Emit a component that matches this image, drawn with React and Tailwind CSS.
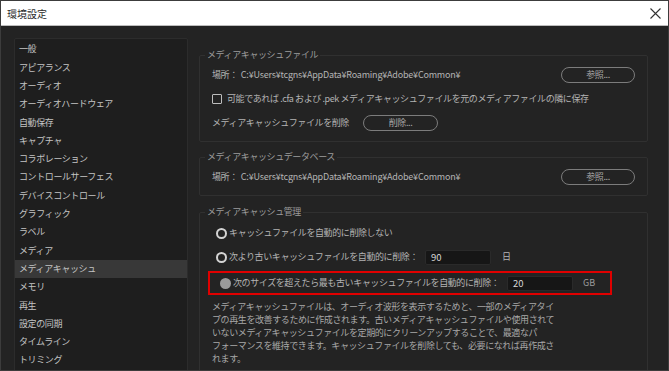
import React from "react";

const font = "[font-family:'Noto_Sans_CJK_JP','Noto_Sans',sans-serif]";

const menu = [
  "一般", "アピアランス", "オーディオ", "オーディオハードウェア", "自動保存", "キャプチャ",
  "コラボレーション", "コントロールサーフェス", "デバイスコントロール", "グラフィック", "ラベル",
  "メディア", "メディアキャッシュ", "メモリ", "再生", "設定の同期", "タイムライン", "トリミング",
];

function PillButton({ children, className = "" }) {
  return (
    <div className={`flex h-[16px] w-[74px] items-center justify-center rounded-full border-[1.5px] border-[#7c7c7c] text-[9px] text-[#a8a8a8] ${className}`}>
      {children}
    </div>
  );
}

function Group({ title, children, className = "" }) {
  return (
    <fieldset className={`rounded-[2px] border border-[#303030] px-[12px] ${className}`}>
      <legend className="ml-[-7px] px-[2px] text-[9px] leading-[14px] text-[#9c9c9c]">{title}</legend>
      {children}
    </fieldset>
  );
}

function Radio({ filled }) {
  return filled ? (
    <span className="ml-[4px] h-[11px] w-[11px] shrink-0 rounded-full bg-[#9a9a9a]" />
  ) : (
    <span className="ml-[4px] h-[11px] w-[11px] shrink-0 rounded-full border-2 border-[#d4d4d4]" />
  );
}

function NumInput({ value }) {
  return (
    <div className="flex h-[15px] w-[66px] shrink-0 items-center rounded-[2px] border border-[#2a2a2a] bg-[#161616] pl-[5px] text-[9.5px] tracking-normal text-[#d8d8d8]">
      {value}
    </div>
  );
}

function PathText() {
  return (
    <span className="flex items-center whitespace-nowrap">
      <span>場所：</span>
      <span className="ml-[3px] text-[9px] tracking-[-0.2px]">C:¥Users¥tcgns¥AppData¥Roaming¥Adobe¥Common¥</span>
    </span>
  );
}

export default function App() {
  return (
    <div className={`h-[371px] w-[669px] overflow-hidden border border-[#3c3c3c] bg-[#232323] ${font}`}>
      <div className="flex h-[25px] items-center justify-between border-b border-[#bdbdbd] bg-white pl-[6px] pr-[7px]">
        <span className="text-[10px] text-[#2a2a2a]">環境設定</span>
        <svg width="11" height="11" viewBox="0 0 11 11" className="mt-[1px]">
          <path d="M0.5 0.5 L10.5 10.5 M10.5 0.5 L0.5 10.5" stroke="#333" strokeWidth="1.1" fill="none" />
        </svg>
      </div>

      <div className="flex pl-[13px] pt-[12px] tracking-[-0.4px]">
        <div className="h-[340px] w-[174px] shrink-0 rounded-[2px] border border-[#2c2c2c] bg-[#1e1e1e] pt-[1px]">
          {menu.map((m) => (
            <div
              key={m}
              className={`flex h-[18.3px] items-center px-[4px] text-[9px] text-[#c4c4c4] ${m === "メディアキャッシュ" ? "bg-[#383838]" : ""}`}
            >
              {m}
            </div>
          ))}
        </div>

        <div className="ml-[11px] mt-[10px] w-[449px] text-[9px] text-[#b4b4b4]">
          <Group title="メディアキャッシュファイル" className="pb-[6px]">
            <div className="pt-[1px]">
              <div className="flex h-[24px] items-center justify-between">
                <PathText />
                <PillButton>参照...</PillButton>
              </div>
              <div className="flex h-[24px] items-center">
                <span className="h-[10px] w-[10px] shrink-0 rounded-[1px] border-[1.5px] border-[#bdbdbd]" />
                <span className="ml-[5px] whitespace-nowrap">可能であれば .cfa および .pek メディアキャッシュファイルを元のメディアファイルの隣に保存</span>
              </div>
              <div className="flex h-[24px] items-center">
                <span className="w-[151px] whitespace-nowrap">メディアキャッシュファイルを削除</span>
                <PillButton className="w-[75px]">削除...</PillButton>
              </div>
            </div>
          </Group>

          <Group title="メディアキャッシュデータベース" className="mt-[8px] pb-[7px]">
            <div className="flex h-[24px] items-center justify-between pt-[1px]">
              <PathText />
              <PillButton>参照...</PillButton>
            </div>
          </Group>

          <Group title="メディアキャッシュ管理" className="mt-[9px] pb-[10px]">
            <div className="pt-[2px]">
              <div className="flex h-[24px] items-center">
                <Radio />
                <span className="ml-[2px] whitespace-nowrap">キャッシュファイルを自動的に削除しない</span>
              </div>
              <div className="flex h-[24px] items-center">
                <Radio />
                <span className="ml-[2px] w-[196px] whitespace-nowrap">次より古いキャッシュファイルを自動的に削除：</span>
                <NumInput value="90" />
                <span className="ml-[11px]">日</span>
              </div>
              <div className="-ml-[4px] mt-[2px] flex h-[24px] w-[404px] items-center border-2 border-[#e00000] pl-[6px]">
                <Radio filled />
                <span className="ml-[2px] w-[274px] whitespace-nowrap">次のサイズを超えたら最も古いキャッシュファイルを自動的に削除：</span>
                <NumInput value="20" />
                <span className="ml-[10px] text-[9px] tracking-normal text-[#9c9c9c]">GB</span>
              </div>
              <div className="mt-[5px] leading-[13px] text-[#a8a8a8]">
                <div className="whitespace-nowrap">メディアキャッシュファイルは、オーディオ波形を表示するためと、一部のメディアタイ</div>
                <div className="whitespace-nowrap">プの再生を改善するために作成されます。古いメディアキャッシュファイルや使用されて</div>
                <div className="whitespace-nowrap">いないメディアキャッシュファイルを定期的にクリーンアップすることで、最適なパ</div>
                <div className="whitespace-nowrap">フォーマンスを維持できます。キャッシュファイルを削除しても、必要になれば再作成さ</div>
                <div className="whitespace-nowrap">れます。</div>
              </div>
            </div>
          </Group>
        </div>
      </div>
    </div>
  );
}
